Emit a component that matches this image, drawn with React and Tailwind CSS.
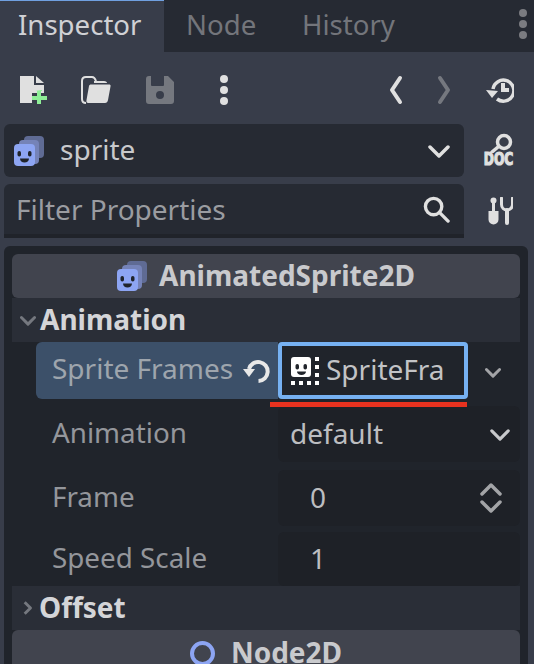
import React from "react";

const FONT = { fontFamily: '"Noto Sans", sans-serif' };

const SpriteIcon = ({ className }) => (
  <svg viewBox="0 0 30 30" className={className}>
    <rect x="10" y="0" width="20" height="22" rx="4" fill="#5f6b94" />
    <rect x="5" y="4" width="20" height="24" rx="4" fill="#7583b8" />
    <rect x="0" y="8" width="21" height="22" rx="4" fill="#8da5f3" />
    <rect x="3.5" y="15" width="3.5" height="5.500" rx="1.700" fill="#20242b" />
    <rect x="14" y="15" width="3.5" height="5.500" rx="1.700" fill="#20242b" />
    <path d="M6 22.500h9c0 2.500-2 4-4.500 4S6 25 6 22.500z" fill="#20242b" />
  </svg>
);

const Chevron = ({ className, color = "#e0e0e0", width = 3.5 }) => (
  <svg viewBox="0 0 22 14" className={className} fill="none">
    <path d="M2 3l9 9 9-9" stroke={color} strokeWidth={width} strokeLinejoin="round" strokeLinecap="round" />
  </svg>
);

const SectionHeader = ({ children }) => (
  <div className="h-11 mx-2 bg-[#2a2e37] flex items-center text-[#d4d5d8] text-[28px] font-bold leading-none">
    {children}
  </div>
);

const PropRow = ({ label, children, className = "" }) => (
  <div className={`flex h-14 mx-2 pl-10 pr-0 items-center ${className}`}>
    <span className="w-[226px] text-[27.8px] leading-none text-[#94969b] pb-[3px]">{label}</span>
    <div className="w-[242px] h-full bg-[#1e2127] rounded-md flex items-center text-[28px] leading-none text-[#bcbdc0] relative">
      {children}
    </div>
  </div>
);

export default function App() {
  return (
    <div style={FONT} className="w-[534px] h-[664px] overflow-hidden bg-[#383d4a] relative">
      {/* TABS */}
      <div className="h-[52px] bg-[#262a33] flex items-stretch">
        <div className="w-[164px] bg-[#383d4a] border-t border-[#70a0e0] pl-[18px] pt-[4px] text-[27.6px] leading-[38px] text-[#d0d1d5]">
          Inspector
        </div>
        <div className="w-[115px] pl-[22px] pt-[5px] text-[27.6px] leading-[38px] text-[#73757b]">Node</div>
        <div className="pl-[23px] pt-[5px] text-[27.6px] leading-[38px] text-[#73757b]">History</div>
        <div className="ml-auto flex flex-col justify-center gap-[3px] pr-[7px] pb-[4px]">
          <span className="w-2 h-2 rounded-full bg-[#7b7c81]" />
          <span className="w-2 h-2 rounded-full bg-[#7b7c81]" />
          <span className="w-2 h-2 rounded-full bg-[#7b7c81]" />
        </div>
      </div>

      {/* TOOLBAR */}
      <div className="h-[72px] flex items-center pl-5 pr-[20px] pt-[4px]">
        <svg viewBox="0 0 28 28" className="w-[28px] h-[28px]">
          <path d="M0 0h14v9h10v8h-4v0h-8v10H0z" fill="#e0e0e0" />
          <path d="M16 0l8 7h-8z" fill="#e0e0e0" />
          <path d="M15 15h7v-1h-1M17 15h4v5h6v4h-6v4h-4v-4h-5v-4h5z" fill="#8eef97" />
        </svg>
        <svg viewBox="0 0 30 28" fill="none" className="w-[30px] h-[28px] ml-[33px]">
          <path d="M5 27c-3 0-4-1-4-4V5c0-2 1-4 4-4h6c2 0 3 1 4 4" stroke="#e0e0e0" strokeWidth="2" />
          <path d="M7 27c-1 0-2-1-1.500-3L8 10c.3-1 1-1.500 2-1.500h18c1 0 2 .5 1.500 2L27 24c-.3 2-1.500 3-3 3z" fill="#e0e0e0" />
          <path d="M13 5h10c2 0 3 1 3 2H13z" fill="#e0e0e0" />
        </svg>
        <svg viewBox="0 0 28 28" className="w-[28px] h-[28px] ml-[35px]">
          <path fillRule="evenodd" fill="#75787f" d="M3 0h19l6 6v19a3 3 0 0 1-3 3H3a3 3 0 0 1-3-3V3a3 3 0 0 1 3-3zM5 0h13v9a1 1 0 0 1-1 1H6a1 1 0 0 1-1-1zM14 15a4 4 0 1 0 0 8 4 4 0 0 0 0-8z" />
        </svg>
        <div className="flex flex-col gap-[3px] ml-[46px]">
          <span className="w-2 h-2 rounded-full bg-[#e0e0e0]" />
          <span className="w-2 h-2 rounded-full bg-[#e0e0e0]" />
          <span className="w-2 h-2 rounded-full bg-[#e0e0e0]" />
        </div>
        <svg viewBox="0 0 14 30" fill="none" className="w-[14px] h-[30px] ml-auto">
          <path d="M11 3L3 15l8 12" stroke="#e0e0e0" strokeWidth="4" strokeLinecap="round" strokeLinejoin="round" />
        </svg>
        <svg viewBox="0 0 14 30" fill="none" className="w-[14px] h-[30px] ml-[34px]">
          <path d="M3 3l8 12-8 12" stroke="#75787f" strokeWidth="4" strokeLinecap="round" strokeLinejoin="round" />
        </svg>
        <svg viewBox="0 0 28 26" fill="none" className="w-[28px] h-[26px] ml-[35px]">
          <path d="M7 12a10.500 10.500 0 1 1 4 10" stroke="#e0e0e0" strokeWidth="3.500" />
          <path d="M0 13l6 8 6-7z" fill="#e0e0e0" />
          <path d="M15 6h4v5h4v4h-8z" fill="#e0e0e0" />
        </svg>
      </div>

      {/* SCENE SELECT */}
      <div className="flex h-[53px] pl-1">
        <div className="w-[460px] bg-[#262a33] rounded-md flex items-center pl-[10px] pr-[14px]">
          <SpriteIcon className="w-[30px] h-[30px]" />
          <span className="ml-4 text-[28px] leading-none text-[#c8c9cc] pb-[3px]">sprite</span>
          <Chevron className="w-[22px] h-[14px] ml-auto" />
        </div>
        <div className="w-[31px] ml-[19px] mt-[9px] flex flex-col items-center">
          <svg viewBox="0 0 24 20" fill="none" className="w-[24px] h-[20px] ml-[4px]">
            <circle cx="15" cy="9" r="6.500" stroke="#e0e0e0" strokeWidth="3.500" />
            <path d="M9 14l-6 5" stroke="#e0e0e0" strokeWidth="3.500" strokeLinecap="round" />
          </svg>
          <span className="text-[17px] h-[13px] leading-[13px] font-bold text-[#e0e0e0] scale-x-[0.72] [-webkit-text-stroke:1.2px_#e0e0e0]" style={{ fontFamily: '"DejaVu Sans", sans-serif' }}>
            DOC
          </span>
        </div>
      </div>

      {/* FILTER */}
      <div className="flex h-[54px] pl-1 mt-[7px]">
        <div className="w-[460px] bg-[#262a33] rounded-t-md border-b-[4px] border-[#20232a] flex items-center pl-3 pr-[14px]">
          <span className="text-[28px] leading-none text-[#9a9ca1]">Filter Properties</span>
          <svg viewBox="0 0 28 28" fill="none" className="w-[27px] h-[27px] ml-auto">
            <circle cx="11" cy="11" r="8.500" stroke="#e0e0e0" strokeWidth="3.500" />
            <path d="M17 17l9 9" stroke="#e0e0e0" strokeWidth="3.500" strokeLinecap="round" />
          </svg>
        </div>
        <svg viewBox="0 0 26 28" className="w-[26px] h-[28px] ml-[23px] mt-[13px]">
          <circle cx="6.500" cy="3.500" r="3" fill="#e0e0e0" />
          <rect x="5" y="4" width="3" height="11" fill="#e0e0e0" />
          <path d="M1.500 14h10v8.500a5 5 0 0 1-10 0z" fill="#e0e0e0" />
          <path d="M14.500 1v6.500a5.500 5.500 0 0 0 11 0V1" fill="none" stroke="#e0e0e0" strokeWidth="3" strokeLinecap="round" />
          <rect x="18" y="11" width="4" height="17" rx="2" fill="#e0e0e0" />
        </svg>
      </div>

      {/* PROPERTY PANEL */}
      <div className="ml-1 mt-2 w-[524px] h-[450px] bg-[#20242b] rounded-t-md pt-2">
        <div className="h-11 mx-2 bg-[#41444e] rounded-md flex items-center justify-center text-[28px] font-bold leading-none text-[#c9cacd]">
          <SpriteIcon className="w-[30px] h-[30px] mr-3" />
          <span className="pb-[2px]">AnimatedSprite2D</span>
        </div>

        <SectionHeader>
          <Chevron className="w-[16px] h-[11px] ml-[8px] mr-[4px]" color="#75787f" width={4} />
          <span className="pb-[2px]">Animation</span>
        </SectionHeader>

        {/* Sprite Frames row */}
        <div className="flex h-[57px] mx-2">
          <div className="ml-6 w-[242px] bg-[#3c5069] rounded-l-md flex items-center pl-4 text-[28px] leading-none text-[#9ea5ad]">
            <span className="pb-[5px]">Sprite Frames</span>
            <svg viewBox="0 0 28 26" fill="none" className="w-[28px] h-[26px] ml-[10px] mb-[2px] shrink-0">
              <path d="M6 12a9.500 9.500 0 1 1 9.500 12" stroke="#e8e8e8" strokeWidth="4" />
              <path d="M0 12h12l-6 8z" fill="#e8e8e8" />
            </svg>
          </div>
          <div className="w-[190px] border-[4px] border-[#76b1f2] rounded-[4px] bg-[#20242b] flex items-center pl-[9px] text-[28px] leading-none text-[#c2c3c6]">
            <svg viewBox="0 0 30 28" className="w-[30px] h-[28px] shrink-0">
              <rect x="0" y="0" width="20" height="20" rx="3" fill="#ffffff" />
              <rect x="4.500" y="7" width="3.500" height="5.500" rx="1.700" fill="#20242b" />
              <rect x="12.500" y="7" width="3.500" height="5.500" rx="1.700" fill="#20242b" />
              <path d="M6 14.500h9c0 2-2 3.500-4.500 3.500S6 16.500 6 14.500z" fill="#20242b" />
              <path d="M24 0h4v4h-4zM24 8h4v4h-4zM24 16h4v4h-4zM0 24h4v4H0zM8 24h4v4H8zM16 24h4v4h-4zM24 24h4v4h-4z" fill="#ffffff" />
            </svg>
            <span className="ml-[5px] pb-[3px]">SpriteFra</span>
          </div>
          <Chevron className="w-[16px] h-[11px] ml-[17px] self-center mt-[3px]" color="#a3a4a7" width={4} />
        </div>

        <div className="h-[7px]" />

        <PropRow label="Animation">
          <span className="pl-3 pb-[3px]">default</span>
          <Chevron className="w-[20px] h-[13px] absolute right-[10px] top-[22px]" color="#c8c9cc" />
        </PropRow>
        <div className="h-2" />
        <PropRow label="Frame">
          <span className="pl-[32px] pb-[3px]">0</span>
          <svg viewBox="0 0 22 30" fill="none" className="w-[22px] h-[30px] absolute right-[18px] top-[13px]">
            <path d="M2 11l9-9 9 9M2 19l9 9 9-9" stroke="#a3a4a7" strokeWidth="3.500" strokeLinecap="round" strokeLinejoin="round" />
          </svg>
        </PropRow>
        <div className="h-1.5" />
        <PropRow label="Speed Scale" className="!h-[54px]">
          <span className="pl-[32px] pb-[3px]">1</span>
        </PropRow>

        <SectionHeader>
          <svg viewBox="0 0 12 18" fill="none" className="w-[10px] h-[16px] ml-[11px] mr-[6px]">
            <path d="M2 2l7 7-7 7" stroke="#75787f" strokeWidth="3.500" strokeLinejoin="round" />
          </svg>
          <span className="pb-[2px]">Offset</span>
        </SectionHeader>

        <div className="h-11 mx-2 bg-[#41444e] rounded-t-md flex items-center justify-center text-[28px] font-bold leading-none text-[#c9cacd]">
          <span className="w-[25px] h-[25px] rounded-full border-[4px] border-[#8da5f3] mr-[16px] mt-[2px]" />
          <span>Node2D</span>
        </div>
      </div>

      {/* red annotation line */}
      <div className="absolute left-[270px] top-[402px] w-[197px] h-[5px] bg-[#e8321f]" />
    </div>
  );
}
